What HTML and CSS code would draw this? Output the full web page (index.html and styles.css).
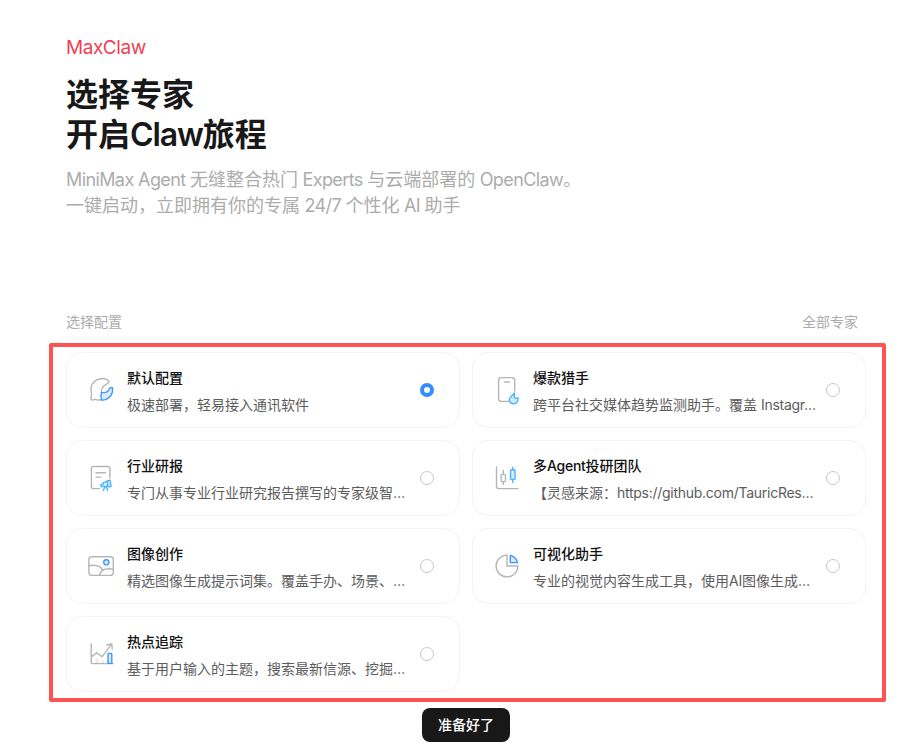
FILE: index.html
```
<!DOCTYPE html>
<html lang="zh-CN">
<head>
    <meta charset="UTF-8">
    <meta name="viewport" content="width=device-width, initial-scale=1.0">
    <title>MaxClaw</title>
    <link rel="stylesheet" href="styles.css">
</head>
<body>
    <div class="container">
        <header class="header">
            <div class="brand">MaxClaw</div>
            <h1>选择专家<br>开启<span class="latin">Claw</span>旅程</h1>
            <p class="intro"><span class="latin">MiniMax Agent </span>无缝整合热门<span class="latin"> Experts </span>与云端部署的<span class="latin"> OpenClaw</span>。<br>一键启动，立即拥有你的专属<span class="latin"> 24/7 </span>个性化<span class="latin"> AI </span>助手</p>
        </header>

        <div class="list-head">
            <span>选择配置</span>
            <a class="all-link">全部专家</a>
        </div>

        <section class="highlight">
            <div class="card">
                <svg class="icon" viewBox="0 0 30 30">
                    <path d="M15.4 25C13.6 24.2 12.6 25.4 11.2 25C9.8 24.6 9.4 23.8 8.2 24.5C6.4 25.7 4.7 25 4.9 23C5.1 21.4 6 20.6 5.4 18.4C4.6 14.6 5 10 8 7C11.4 3.4 17 2.8 20.4 4.4C22 5 23.2 6 22.8 7C22.2 9 18.6 9.6 16.8 12C15.4 13.8 15.4 15.6 15.4 17.4"/>
                    <path class="blue" d="M15.4 17.5C20 18 22.6 16.2 23.2 13.8C24 12.8 25.2 12.4 26.4 12.6C27 15.6 26 19.5 23.6 22C21.4 24.2 18.5 25.4 15.6 25C14.7 22.5 14.7 20 15.4 17.5Z"/>
                </svg>
                <div class="card-text">
                    <h2>默认配置</h2>
                    <p>极速部署，轻易接入通讯软件</p>
                </div>
                <span class="radio checked"></span>
            </div>

            <div class="card">
                <svg class="icon" viewBox="0 0 30 30">
                    <path d="M17 26.4H9.3C7.6 26.4 6.6 25.4 6.6 23.7V5.3C6.6 3.6 7.6 2.6 9.3 2.6H20C21.7 2.6 22.7 3.6 22.7 5.3V16M12.3 7H17.6"/>
                    <path class="sky" d="M22.4 18C22.8 20.2 22 21.3 22.4 22.4C23 23.6 24.2 23.4 26 22.8C26.6 26.2 24.6 28.8 21.6 28.8C18.8 28.8 17.2 26.8 17.4 24.4C17.5 21.8 20.6 20.8 22.4 18Z"/>
                </svg>
                <div class="card-text">
                    <h2>爆款猎手</h2>
                    <p>跨平台社交媒体趋势监测助手。覆盖 <span class="latin">Instagr…</span></p>
                </div>
                <span class="radio"></span>
            </div>

            <div class="card">
                <svg class="icon" viewBox="0 0 30 30">
                    <path d="M13.4 25.6H7.6C6.2 25.6 5.4 24.8 5.4 23.4V5.6C5.4 4.2 6.2 3.5 7.6 3.5H21.8C23.2 3.5 23.9 4.2 23.9 5.6V15M10 9.7H19.4M10 14.1H14.8"/>
                    <path class="sky" d="M14.8 21.6L17.4 20.8L17.2 19.6L21.2 18.4L21.2 17.8L24 17.3L25.1 23.6L22.4 23.9L22 23.1L18.2 23.8L17.8 23.1L15.2 23.8ZM21.2 18.4L22 23.1M19 24L17.2 27.4M20.4 23.8L21.8 27.4"/>
                </svg>
                <div class="card-text">
                    <h2>行业研报</h2>
                    <p>专门从事专业行业研究报告撰写的专家级智<span class="latin">…</span></p>
                </div>
                <span class="radio"></span>
            </div>

            <div class="card">
                <svg class="icon" viewBox="0 0 30 30">
                    <path d="M4.5 4V23.6C4.5 25 5.2 25.6 6.5 25.6H26M11.3 7.4V11.4M11.3 18.6V21.4M9.1 12.4C9.1 11.7 9.5 11.4 10.1 11.4H12.5C13.1 11.4 13.5 11.7 13.5 12.4V17.6C13.5 18.3 13.1 18.6 12.5 18.6H10.1C9.5 18.6 9.1 18.3 9.1 17.6Z"/>
                    <rect class="sky" x="18.5" y="6.8" width="4.6" height="9.6" rx="1"/>
                    <path class="sky" d="M20.8 4.2V6.8M20.8 16.4V19.5"/>
                </svg>
                <div class="card-text">
                    <h2>多<span class="latin">Agent</span>投研团队</h2>
                    <p>【灵感来源：<span class="latin">https://github.com/TauricRes…</span></p>
                </div>
                <span class="radio"></span>
            </div>

            <div class="card">
                <svg class="icon" viewBox="0 0 30 30">
                    <rect x="2.9" y="5.7" width="24.4" height="18.7" rx="3"/>
                    <path d="M3 14.8C7.5 13.5 14.2 14.2 16.4 18.6M13.6 24.2C14.4 20 18.2 16.6 27.2 18.2"/>
                    <circle class="blue" cx="20.3" cy="11.3" r="2.6"/>
                </svg>
                <div class="card-text">
                    <h2>图像创作</h2>
                    <p>精选图像生成提示词集。覆盖手办、场景、<span class="latin">…</span></p>
                </div>
                <span class="radio"></span>
            </div>

            <div class="card">
                <svg class="icon" viewBox="0 0 30 30">
                    <path d="M15 4.1A10.9 10.9 0 1 0 25.9 15H15Z"/>
                    <path class="blue" d="M18.3 4.4C22 5.4 24.6 8 25.5 11.6H18.3Z"/>
                </svg>
                <div class="card-text">
                    <h2>可视化助手</h2>
                    <p>专业的视觉内容生成工具，使用<span class="latin">AI</span>图像生成<span class="latin">…</span></p>
                </div>
                <span class="radio"></span>
            </div>

            <div class="card">
                <svg class="icon" viewBox="0 0 30 30">
                    <path class="faint" d="M9.6 19.4H12.4V24H9.6ZM15.8 21.4H18.2V24H15.8Z"/>
                    <path d="M5.2 5V23.6C5.2 24.3 5.6 24.6 6.2 24.6H27.2M5.4 17.9L10.6 13.7L16.2 17.7L25.4 5.4M21 6L25.8 5L26.2 10"/>
                    <path class="blue" d="M22 24.4V15.2C22 14.7 22.3 14.4 22.8 14.4H25C25.5 14.4 25.8 14.7 25.8 15.2V24.4Z"/>
                </svg>
                <div class="card-text">
                    <h2>热点追踪</h2>
                    <p>基于用户输入的主题，搜索最新信源、挖掘<span class="latin">…</span></p>
                </div>
                <span class="radio"></span>
            </div>
        </section>

        <button class="ready-btn">准备好了</button>
    </div>
</body>
</html>
```
FILE: styles.css
```
:root {
    --brand-color: #f23f53;
    --title-color: #181818;
    --text-color: #5c5c5c;
    --muted-color: #acacac;
    --border-color: #f4f4f4;
    --highlight-color: #ff5252;
    --blue: #3d97ff;
    --sky: #4db2ff;
}

* {
    margin: 0;
    padding: 0;
    box-sizing: border-box;
    font-family: Inter, "Noto Sans CJK SC", sans-serif;
}

body {
    background-color: #fff;
    color: var(--title-color);
    height: 750px;
    overflow: hidden;
}

.container {
    width: 800px;
    margin-left: 66px;
    padding-top: 35px;
    display: flex;
    flex-direction: column;
}

.header {
    height: 277px;
}

.brand {
    color: var(--brand-color);
    font-size: 19px;
    line-height: 26px;
    letter-spacing: -0.45px;
    margin-bottom: 14px;
}

h1 {
    font-size: 32px;
    font-weight: 600;
    line-height: 40px;
}

h1 .latin {
    letter-spacing: -1.1px;
}

.intro {
    margin-top: 12px;
    color: var(--muted-color);
    font-size: 18px;
    line-height: 26px;
    white-space: nowrap;
}

.intro .latin {
    letter-spacing: -0.6px;
}

.list-head {
    display: flex;
    justify-content: space-between;
    padding-right: 8px;
    color: var(--muted-color);
    font-size: 14px;
    line-height: 20px;
}

.highlight {
    display: grid;
    grid-template-columns: 394px 394px;
    grid-auto-rows: 76px;
    gap: 12px;
    width: 837px;
    height: 359px;
    margin: 11px 0 6px -17px;
    padding: 5px 13px;
    border: 4px solid var(--highlight-color);
    border-radius: 2px;
}

.card {
    display: flex;
    align-items: center;
    padding: 0 25px 0 19px;
    border: 1px solid var(--border-color);
    border-radius: 16px;
}

.icon {
    flex: none;
    width: 30px;
    height: 30px;
    margin-right: 11px;
    fill: none;
    stroke: #b5b5b5;
    stroke-width: 1.4;
    stroke-linecap: round;
    stroke-linejoin: round;
}

.icon .blue {
    stroke: var(--blue);
    fill: #d9eaff;
}

.icon .sky {
    stroke: var(--sky);
    fill: #d3ecff;
}

.icon .faint {
    stroke: none;
    fill: #ebebeb;
}

.card-text {
    flex: 1;
    min-width: 0;
    margin-right: 6px;
    padding-top: 2px;
}

.card-text .latin {
    letter-spacing: -0.27px;
}

.card h2 {
    font-size: 14px;
    font-weight: 500;
    line-height: 22px;
    color: #111;
}

.card p {
    margin-top: 5px;
    color: var(--text-color);
    font-size: 14px;
    line-height: 22px;
    white-space: nowrap;
}

.radio {
    flex: none;
    width: 14px;
    height: 14px;
    border: 1.5px solid #c8c8c8;
    border-radius: 50%;
}

.radio.checked {
    border: 4.5px solid #338dfa;
}

.ready-btn {
    align-self: center;
    width: 88px;
    height: 34px;
    padding-bottom: 2px;
    border: none;
    border-radius: 8px;
    background-color: var(--title-color);
    color: #fff;
    font-size: 14px;
    font-weight: 500;
    cursor: pointer;
}
```
